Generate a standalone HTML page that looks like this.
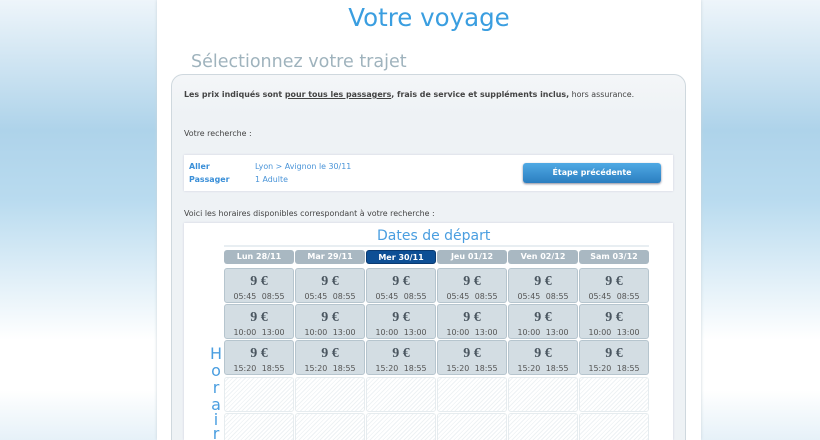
<!DOCTYPE html>
<html style="overflow:hidden;height:440px"><head><meta charset="utf-8"><style>
*{margin:0;padding:0;box-sizing:border-box}
body{width:820px;height:440px;overflow:hidden;position:relative;font-family:"DejaVu Sans",sans-serif;
background:linear-gradient(to bottom,#eef5fa 0px,#aed3ea 130px,#b9dbef 200px,#ffffff 340px,#ffffff 390px,#e6f1f8 440px)}
.page{position:absolute;left:157px;top:0;width:544px;height:440px;background:#fff;box-shadow:0 0 3px #c8d3da}
.abs{position:absolute}
h1{position:absolute;left:157px;width:544px;top:3px;text-align:center;font:24.5px "DejaVu Sans",sans-serif;color:#3a9ee0;font-weight:normal}
.h2{position:absolute;left:191px;top:52px;font:17.5px "DejaVu Sans",sans-serif;color:#9fb3bd}
.panel{position:absolute;left:171px;top:74px;width:515px;height:366px;background:linear-gradient(#f4f6f8,#eef2f5 40px);border:1px solid #cfd8de;border-bottom:none;border-radius:12px 12px 0 0}
.t{font-size:7.9px;color:#444;position:absolute;white-space:nowrap}
.box{position:absolute;left:184px;top:155px;width:489px;height:36px;background:#fff;box-shadow:0 0 2px #ccd}
.lbl{position:absolute;font-size:7.9px;font-weight:bold;color:#3a8fd8}
.val{position:absolute;font-size:7.9px;color:#4a94d8}
.btn{position:absolute;left:523px;top:163px;width:138px;height:20px;border-radius:3px;background:linear-gradient(#4fa9e4,#2b7ec0);color:#fff;font-size:7.9px;font-weight:bold;text-align:center;line-height:20px;box-shadow:0 1px 2px #889}
.grid{position:absolute;left:184px;top:223px;width:489px;height:217px;background:#fff;box-shadow:0 0 2px #ccd}
.hd{position:absolute;top:250px;height:14px;width:70px;border-radius:3px;background:#a9b8c2;color:#fff;font-size:8px;font-weight:bold;text-align:center;line-height:14px}
.c{position:absolute;width:70px;height:35px;border-radius:3px;background:#d3dde3;border:1px solid #b6c5ce;text-align:center;white-space:nowrap}
.c b{display:block;font:bold 14px "Liberation Serif",serif;color:#4a5660;margin-top:5px;height:16px;line-height:16px}
.c span{display:block;font-size:7.9px;color:#555;word-spacing:3px;line-height:10px;margin-top:2px}
.e{position:absolute;width:70px;height:35px;border-radius:3px;border:1px solid #e6ecef;background:repeating-linear-gradient(135deg,#fff 0 2px,#eef2f4 2px 3px)}
.v{position:absolute;left:208px;font:16px "DejaVu Sans",sans-serif;color:#4a9ee0;width:16px;text-align:center;line-height:16px}
</style></head><body>
<div class="page"></div>
<h1>Votre voyage</h1>
<div class="h2">Sélectionnez votre trajet</div>
<div class="panel"></div>
<div class="t" style="left:184px;top:90px"><b>Les prix indiqués sont <u>pour tous les passagers</u>, frais de service et suppléments inclus,</b> hors assurance.</div>
<div class="t" style="left:184px;top:129px">Votre recherche :</div>
<div class="box"></div>
<div class="lbl" style="left:189px;top:162px">Aller</div>
<div class="lbl" style="left:189px;top:175px">Passager</div>
<div class="val" style="left:255px;top:162px">Lyon &gt; Avignon le 30/11</div>
<div class="val" style="left:255px;top:175px">1 Adulte</div>
<div class="btn">Étape précédente</div>
<div class="t" style="left:184px;top:209px">Voici les horaires disponibles correspondant à votre recherche :</div>
<div class="grid"></div>
<div class="abs" style="left:224px;top:245px;width:425px;height:2px;background:#e8eef2"></div>
<div class="abs" style="left:377px;top:228px;font:14px 'DejaVu Sans',sans-serif;color:#4a9ee0">Dates de départ</div>
<div class="hd" style="left:224px">Lun 28/11</div>
<div class="hd" style="left:295px">Mar 29/11</div>
<div class="hd" style="left:366px;background:#0d4f95;border:1px solid #0a3a70">Mer 30/11</div>
<div class="hd" style="left:437px">Jeu 01/12</div>
<div class="hd" style="left:508px">Ven 02/12</div>
<div class="hd" style="left:579px">Sam 03/12</div>
<div class="v" style="top:346px">H</div>
<div class="v" style="top:363px">o</div>
<div class="v" style="top:380px">r</div>
<div class="v" style="top:397px">a</div>
<div class="v" style="top:412px">i</div>
<div class="v" style="top:426px">r</div>
<div class="c" style="left:224px;top:268px"><b>9 €</b><span>05:45 08:55</span></div>
<div class="c" style="left:295px;top:268px"><b>9 €</b><span>05:45 08:55</span></div>
<div class="c" style="left:366px;top:268px"><b>9 €</b><span>05:45 08:55</span></div>
<div class="c" style="left:437px;top:268px"><b>9 €</b><span>05:45 08:55</span></div>
<div class="c" style="left:508px;top:268px"><b>9 €</b><span>05:45 08:55</span></div>
<div class="c" style="left:579px;top:268px"><b>9 €</b><span>05:45 08:55</span></div>
<div class="c" style="left:224px;top:304px"><b>9 €</b><span>10:00 13:00</span></div>
<div class="c" style="left:295px;top:304px"><b>9 €</b><span>10:00 13:00</span></div>
<div class="c" style="left:366px;top:304px"><b>9 €</b><span>10:00 13:00</span></div>
<div class="c" style="left:437px;top:304px"><b>9 €</b><span>10:00 13:00</span></div>
<div class="c" style="left:508px;top:304px"><b>9 €</b><span>10:00 13:00</span></div>
<div class="c" style="left:579px;top:304px"><b>9 €</b><span>10:00 13:00</span></div>
<div class="c" style="left:224px;top:340px"><b>9 €</b><span>15:20 18:55</span></div>
<div class="c" style="left:295px;top:340px"><b>9 €</b><span>15:20 18:55</span></div>
<div class="c" style="left:366px;top:340px"><b>9 €</b><span>15:20 18:55</span></div>
<div class="c" style="left:437px;top:340px"><b>9 €</b><span>15:20 18:55</span></div>
<div class="c" style="left:508px;top:340px"><b>9 €</b><span>15:20 18:55</span></div>
<div class="c" style="left:579px;top:340px"><b>9 €</b><span>15:20 18:55</span></div>
<div class="e" style="left:224px;top:377px"></div><div class="e" style="left:295px;top:377px"></div><div class="e" style="left:366px;top:377px"></div><div class="e" style="left:437px;top:377px"></div><div class="e" style="left:508px;top:377px"></div><div class="e" style="left:579px;top:377px"></div>
<div class="e" style="left:224px;top:413px"></div><div class="e" style="left:295px;top:413px"></div><div class="e" style="left:366px;top:413px"></div><div class="e" style="left:437px;top:413px"></div><div class="e" style="left:508px;top:413px"></div><div class="e" style="left:579px;top:413px"></div>
</body></html>
